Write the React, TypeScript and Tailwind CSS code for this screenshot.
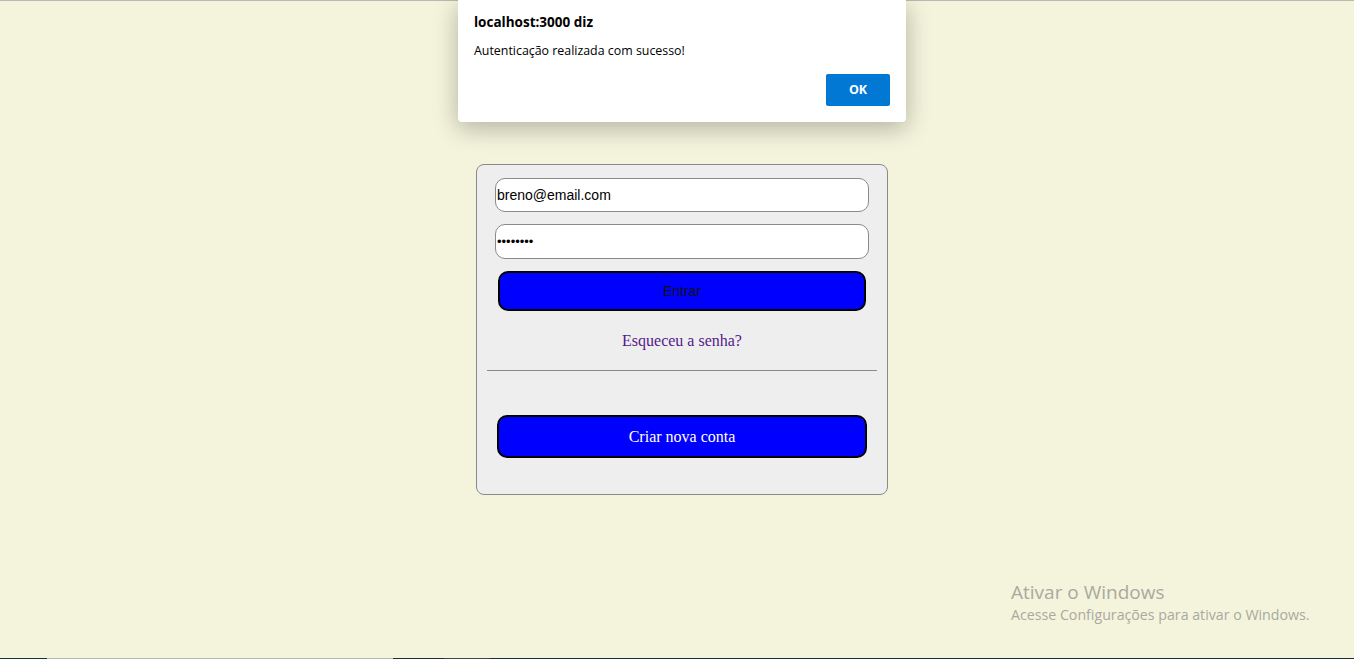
export default function App() {
  return (
    <main className="relative flex h-[659px] w-full flex-col overflow-hidden bg-[#f4f4dc]">
      <div className="h-px w-full bg-[#b9b9b4]" />

      {/* alert dialog */}
      <div className="absolute left-[458px] top-0 z-10 h-[122px] w-[448px] rounded-b-[4px] bg-white px-4 shadow-[0_6px_24px_rgba(0,0,0,0.28)] font-['Open_Sans','Noto_Sans',sans-serif]">
        <p className="mt-[13px] text-[13.5px] font-bold leading-[18px] text-black">localhost:3000 diz</p>
        <p className="mt-[11px] text-[12.4px] leading-[18px] text-black">Autenticação realizada com sucesso!</p>
        <div className="mt-[14px] flex justify-end">
          <button className="h-[32px] w-[64px] rounded-[2px] bg-[#0078d4] text-[12.5px] font-bold text-white">OK</button>
        </div>
      </div>

      <div className="flex flex-1 justify-center pl-[10px] pt-[163px]">
        <div className="flex h-[331px] w-[412px] flex-col rounded-[8px] border border-[#8a8a8a] bg-[#eeeeee] px-[10px] pt-[13px]">
          <div className="flex flex-col gap-[12px] px-[8px]">
            <input
              readOnly
              value="breno@email.com"
              className="h-[34px] w-full rounded-[10px] border border-[#8a8a8a] bg-white px-[1px] text-[14px] text-black outline-none font-['Liberation_Sans',Arial,sans-serif]"
            />
            <input
              readOnly
              type="password"
              value="12345678"
              className="h-[35px] w-full rounded-[10px] border border-[#8a8a8a] bg-white px-[1px] text-[13px] text-black outline-none font-['Liberation_Sans',Arial,sans-serif]"
            />
          </div>
          <div className="mt-[12px] px-[11px]">
            <button className="h-[40px] w-full rounded-[10px] border-2 border-black bg-[#0000ff] pt-[1px] text-[14px] text-[#111] font-['Liberation_Sans',Arial,sans-serif]">
              Entrar
            </button>
          </div>
          <a className="mt-[20px] text-center text-[16px] leading-[20px] text-[#551a8b] font-['Liberation_Serif','Times_New_Roman',serif]">
            Esqueceu a senha?
          </a>
          <hr className="mt-[19px] border-t border-[#8a8a8a]" />
          <div className="mt-[44px] px-[10px]">
            <button className="h-[43px] w-full rounded-[10px] border-2 border-black bg-[#0000ff] text-[16px] text-white font-['Liberation_Serif','Times_New_Roman',serif]">
              Criar nova conta
            </button>
          </div>
        </div>
      </div>

      {/* windows watermark */}
      <div className="absolute left-[1011px] top-[579px] text-[#a9a9a0] font-['Open_Sans','Noto_Sans',sans-serif]">
        <p className="text-[19px] leading-[26px]">Ativar o Windows</p>
        <p className="text-[14.2px] leading-[20px]">Acesse Configurações para ativar o Windows.</p>
      </div>

      <div className="flex h-px w-full">
        <div className="w-[47px] bg-[#16343a]" />
        <div className="w-[346px] bg-[#b8b8b0]" />
        <div className="w-[51px] bg-[#1c3038]" />
        <div className="w-[46px] bg-[#3b4a4a]" />
        <div className="flex-1 bg-[#16303a]" />
      </div>
    </main>
  );
}
